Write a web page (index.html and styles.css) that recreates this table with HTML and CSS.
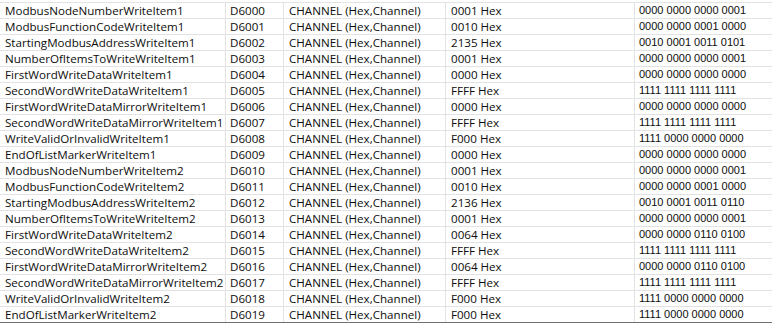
FILE: index.html
```html
<!DOCTYPE html>
<html>
<head>
<meta charset="utf-8">
<link rel="stylesheet" href="styles.css">
</head>
<body>
<div class="sheet">
  <div class="row"><div class="c name">ModbusNodeNumberWriteItem1</div><div class="c addr">D6000</div><div class="c type">CHANNEL (Hex,Channel)</div><div class="c val">0001 Hex</div><div class="c bin">0000 0000 0000 0001</div></div>
  <div class="row"><div class="c name">ModbusFunctionCodeWriteItem1</div><div class="c addr">D6001</div><div class="c type">CHANNEL (Hex,Channel)</div><div class="c val">0010 Hex</div><div class="c bin">0000 0000 0001 0000</div></div>
  <div class="row"><div class="c name">StartingModbusAddressWriteItem1</div><div class="c addr">D6002</div><div class="c type">CHANNEL (Hex,Channel)</div><div class="c val">2135 Hex</div><div class="c bin">0010 0001 0011 0101</div></div>
  <div class="row"><div class="c name">NumberOfItemsToWriteWriteItem1</div><div class="c addr">D6003</div><div class="c type">CHANNEL (Hex,Channel)</div><div class="c val">0001 Hex</div><div class="c bin">0000 0000 0000 0001</div></div>
  <div class="row"><div class="c name">FirstWordWriteDataWriteItem1</div><div class="c addr">D6004</div><div class="c type">CHANNEL (Hex,Channel)</div><div class="c val">0000 Hex</div><div class="c bin">0000 0000 0000 0000</div></div>
  <div class="row"><div class="c name">SecondWordWriteDataWriteItem1</div><div class="c addr">D6005</div><div class="c type">CHANNEL (Hex,Channel)</div><div class="c val">FFFF Hex</div><div class="c bin">1111 1111 1111 1111</div></div>
  <div class="row"><div class="c name">FirstWordWriteDataMirrorWriteItem1</div><div class="c addr">D6006</div><div class="c type">CHANNEL (Hex,Channel)</div><div class="c val">0000 Hex</div><div class="c bin">0000 0000 0000 0000</div></div>
  <div class="row"><div class="c name">SecondWordWriteDataMirrorWriteItem1</div><div class="c addr">D6007</div><div class="c type">CHANNEL (Hex,Channel)</div><div class="c val">FFFF Hex</div><div class="c bin">1111 1111 1111 1111</div></div>
  <div class="row"><div class="c name">WriteValidOrInvalidWriteItem1</div><div class="c addr">D6008</div><div class="c type">CHANNEL (Hex,Channel)</div><div class="c val">F000 Hex</div><div class="c bin">1111 0000 0000 0000</div></div>
  <div class="row"><div class="c name">EndOfListMarkerWriteItem1</div><div class="c addr">D6009</div><div class="c type">CHANNEL (Hex,Channel)</div><div class="c val">0000 Hex</div><div class="c bin">0000 0000 0000 0000</div></div>
  <div class="row"><div class="c name">ModbusNodeNumberWriteItem2</div><div class="c addr">D6010</div><div class="c type">CHANNEL (Hex,Channel)</div><div class="c val">0001 Hex</div><div class="c bin">0000 0000 0000 0001</div></div>
  <div class="row"><div class="c name">ModbusFunctionCodeWriteItem2</div><div class="c addr">D6011</div><div class="c type">CHANNEL (Hex,Channel)</div><div class="c val">0010 Hex</div><div class="c bin">0000 0000 0001 0000</div></div>
  <div class="row"><div class="c name">StartingModbusAddressWriteItem2</div><div class="c addr">D6012</div><div class="c type">CHANNEL (Hex,Channel)</div><div class="c val">2136 Hex</div><div class="c bin">0010 0001 0011 0110</div></div>
  <div class="row"><div class="c name">NumberOfItemsToWriteWriteItem2</div><div class="c addr">D6013</div><div class="c type">CHANNEL (Hex,Channel)</div><div class="c val">0001 Hex</div><div class="c bin">0000 0000 0000 0001</div></div>
  <div class="row"><div class="c name">FirstWordWriteDataWriteItem2</div><div class="c addr">D6014</div><div class="c type">CHANNEL (Hex,Channel)</div><div class="c val">0064 Hex</div><div class="c bin">0000 0000 0110 0100</div></div>
  <div class="row"><div class="c name">SecondWordWriteDataWriteItem2</div><div class="c addr">D6015</div><div class="c type">CHANNEL (Hex,Channel)</div><div class="c val">FFFF Hex</div><div class="c bin">1111 1111 1111 1111</div></div>
  <div class="row"><div class="c name">FirstWordWriteDataMirrorWriteItem2</div><div class="c addr">D6016</div><div class="c type">CHANNEL (Hex,Channel)</div><div class="c val">0064 Hex</div><div class="c bin">0000 0000 0110 0100</div></div>
  <div class="row"><div class="c name">SecondWordWriteDataMirrorWriteItem2</div><div class="c addr">D6017</div><div class="c type">CHANNEL (Hex,Channel)</div><div class="c val">FFFF Hex</div><div class="c bin">1111 1111 1111 1111</div></div>
  <div class="row"><div class="c name">WriteValidOrInvalidWriteItem2</div><div class="c addr">D6018</div><div class="c type">CHANNEL (Hex,Channel)</div><div class="c val">F000 Hex</div><div class="c bin">1111 0000 0000 0000</div></div>
  <div class="row last"><div class="c name">EndOfListMarkerWriteItem2</div><div class="c addr">D6019</div><div class="c type">CHANNEL (Hex,Channel)</div><div class="c val">F000 Hex</div><div class="c bin">1111 0000 0000 0000</div></div>
</div>
</body>
</html>
```

FILE: styles.css
```css
html, body {
  margin: 0;
  padding: 0;
  background: #ffffff;
}
.sheet {
  margin-top: 2px;
  width: 772px;
  border-top: 1px solid #e3e3e3;
  font-family: "Open Sans", "Noto Sans", sans-serif;
  font-size: 11.6px;
  color: #0d0d0d;
}
.row {
  display: grid;
  grid-template-columns: 226px 58px 162px 189px 137px;
  height: 16px;
  box-sizing: border-box;
  border-bottom: 1px solid #e3e3e3;
}
.row.last {
  border-bottom-color: #707070;
}
.c {
  line-height: 15px;
  height: 15px;
  white-space: nowrap;
  overflow: hidden;
  padding-left: 4px;
  box-sizing: border-box;
  border-right: 1px solid #e3e3e3;
}
.c.name {
  padding-left: 5px;
}
.c.type {
  padding-left: 5px;
}
.c.val {
  padding-left: 5px;
}
.c.bin {
  border-right: none;
  font-family: "Liberation Sans", Arial, sans-serif;
  font-size: 11px;
}
```
